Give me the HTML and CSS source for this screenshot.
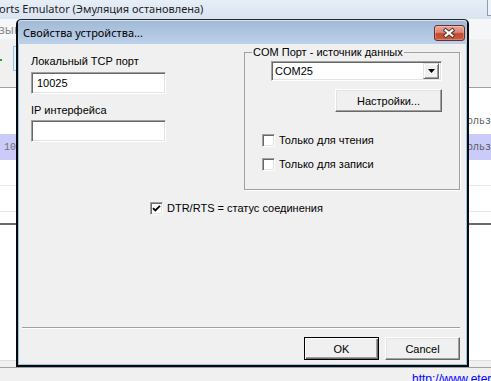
FILE: index.html
```html
<!DOCTYPE html>
<html lang="ru">
<head>
<meta charset="utf-8">
<title>Свойства устройства</title>
<link rel="stylesheet" href="styles.css">
</head>
<body>
<div class="app">
  <div class="app-title">
    <span class="app-title-text">orts Emulator (Эмуляция остановлена)</span>
    <span class="app-title-btn"></span>
  </div>
  <div class="menubar"><span class="menu-item">зык</span></div>
  <div class="toolbar">
    <svg class="tb-plus" width="8" height="8" viewBox="0 0 8 8"><path d="M4 1v6M1 4h6" stroke="#2f9a2f" stroke-width="2"/></svg>
    <span class="tb-btn"></span>
  </div>
  <div class="list">
    <div class="row row-top"></div>
    <div class="row"><span class="cell"></span><span class="cell">польз</span></div>
    <div class="row row-sel"><span class="cell">10025</span><span class="cell">польз</span></div>
    <div class="row row-line"></div>
    <div class="row row-line"></div>
    <div class="row row-end"></div>
  </div>
  <div class="lower"></div>
  <div class="lower-gap"></div>
  <div class="statusbar"><span class="link">http://www.eter</span></div>
</div>

<div class="dialog">
  <div class="dlg-titlebar">
    <span class="dlg-title">Свойства устройства...</span>
    <span class="dlg-close">
      <svg width="31" height="16" viewBox="0 0 31 16"><path d="M12 5.2L19 10.8M19 5.2L12 10.8" stroke="#5a3531" stroke-width="4.2" stroke-linecap="square"/><path d="M12 5.2L19 10.8M19 5.2L12 10.8" stroke="#ffffff" stroke-width="2.2" stroke-linecap="square"/></svg>
    </span>
  </div>
  <div class="dlg-client">
    <div class="dlg-top">
      <div class="dlg-left">
        <span class="lbl">Локальный TCP порт</span>
        <div class="edit">10025</div>
        <span class="lbl lbl-ip">IP интерфейса</span>
        <div class="edit"></div>
      </div>
      <fieldset class="group">
        <legend class="group-legend">COM Порт - источник данных</legend>
        <div class="group-body">
          <div class="combo">
            <span class="combo-text">COM25</span>
            <span class="combo-btn"><svg width="7" height="4" viewBox="0 0 7 4"><path d="M0 0h7L3.5 4z" fill="#000"/></svg></span>
          </div>
          <div class="btn btn-settings">Настройки...</div>
          <div class="check check-first"><span class="box"></span><span>Только для чтения</span></div>
          <div class="check check-second"><span class="box"></span><span>Только для записи</span></div>
        </div>
      </fieldset>
    </div>
    <div class="check check-dtr"><span class="box"><svg width="9" height="9" viewBox="0 0 9 9"><path d="M1 4.2L3.3 6.5L8 1.8" fill="none" stroke="#000" stroke-width="1.8"/></svg></span><span>DTR/RTS = статус соединения</span></div>
    <div class="spacer"></div>
    <div class="separator"></div>
    <div class="buttons">
      <div class="btn btn-default">OK</div>
      <div class="btn">Cancel</div>
    </div>
  </div>
</div>
</body>
</html>
```

FILE: styles.css
```css
html, body {
  margin: 0;
  padding: 0;
}
body {
  width: 491px;
  height: 381px;
  overflow: hidden;
  position: relative;
  font-family: "Liberation Sans", Arial, sans-serif;
  font-size: 11px;
  color: #000;
  background: #f0f0f0;
}

/* background application window */
.app {
  display: flex;
  flex-direction: column;
  height: 381px;
}
.app-title {
  height: 19px;
  flex: none;
  background: linear-gradient(#e6eef7, #d9e4f1);
  display: flex;
  align-items: flex-start;
}
.app-title-text {
  font-family: "Noto Sans", sans-serif;
  font-size: 11px;
  line-height: 17px;
  color: #1e1e1e;
  margin-left: -1px;
  white-space: nowrap;
}
.app-title-btn {
  margin-left: auto;
  width: 3px;
  height: 15px;
  border-left: 1px solid #8e9db1;
  border-bottom: 1px solid #8e9db1;
  background: #eef3f9;
}
.menubar {
  height: 20px;
  flex: none;
  background: #f5f6f8;
  display: flex;
  align-items: center;
}
.menu-item {
  font-family: "Noto Sans", sans-serif;
  font-size: 12px;
  color: #8c8c8c;
  margin-left: -1px;
}
.toolbar {
  height: 49px;
  flex: none;
  box-sizing: border-box;
  background: #f0f0f0;
  border-bottom: 1px solid #a0a0a0;
  display: flex;
  align-items: flex-start;
  padding-top: 7px;
}
.tb-plus {
  margin-left: -5px;
  margin-top: 10px;
}
.tb-btn {
  margin-left: 10px;
  width: 30px;
  height: 23px;
  border: 1px solid #93c2ec;
  background: #e8f2fb;
}
.list {
  display: flex;
  flex-direction: column;
  background: #fff;
  flex: none;
}
.row {
  display: grid;
  grid-template-columns: 461px 30px;
  align-items: center;
  font-family: "Liberation Mono", "Courier New", monospace;
  font-size: 10px;
  color: #5c5c5c;
  height: 25px;
  box-sizing: border-box;
  white-space: nowrap;
}
.row-top { height: 21px; }
.row-sel {
  height: 26px;
  background: #cbcbfa;
}
.row-sel .cell:first-child { padding-left: 4px; color: #707070; }
.row-line {
  height: 26px;
  border-bottom: 1px solid #e6e6e6;
}
.row-end { height: 11px; }
.lower {
  height: 138px;
  flex: none;
  box-sizing: border-box;
  background: #fff;
  border-top: 2px solid #6b6b6b;
  border-bottom: 1px solid #dedede;
}
.lower-gap {
  height: 6px;
  flex: none;
  background: #f0f0f0;
  border-bottom: 1px solid #a0a0a0;
}
.statusbar {
  flex: 1;
  background: #f0f0f0;
  padding: 4px 0 0 412px;
  white-space: nowrap;
}
.link {
  font-family: "Liberation Sans", Arial, sans-serif;
  font-size: 12px;
  line-height: 14px;
  color: #0000ff;
  text-decoration: underline;
}

/* dialog window */
.dialog {
  position: absolute;
  left: 16px;
  top: 19px;
  width: 453px;
  height: 348px;
  box-sizing: border-box;
  border: 2px solid #0a0a0a;
  border-top: 1px solid #2a2a2a;
  border-radius: 5px 5px 0 0;
  background: #8cc6ee;
  display: flex;
  flex-direction: column;
}
.dlg-titlebar {
  height: 24px;
  flex: none;
  display: flex;
  align-items: center;
  background: linear-gradient(#a1b9d6, #bcd1e9);
  box-shadow: inset 0 1px #d3e0ef;
  border-radius: 4px 4px 0 0;
}
.dlg-title {
  font-family: "Noto Sans", sans-serif;
  font-size: 11px;
  color: #000;
  margin-left: 5px;
  white-space: nowrap;
}
.dlg-close {
  margin-left: auto;
  margin-right: 2px;
  margin-top: 1px;
  width: 31px;
  height: 16px;
  box-sizing: border-box;
  border: 1px solid #6a2f27;
  border-radius: 3px;
  background: linear-gradient(#e6a99c, #d98676 45%, #c6472f 55%, #cd5c43);
  box-shadow: inset 0 0 0 1px rgba(255, 255, 255, 0.25);
  display: flex;
  align-items: center;
  justify-content: center;
  overflow: hidden;
}
.dlg-close svg { display: block; margin-left: -1px; }
.dlg-client {
  flex: 1;
  margin: 0 1px 1px 1px;
  background: #f0f0f0;
  display: flex;
  flex-direction: column;
}
.dlg-top {
  display: flex;
  align-items: flex-start;
}
.dlg-left {
  display: flex;
  flex-direction: column;
  margin-left: 12px;
  margin-top: 11px;
  width: 135px;
}
.lbl {
  line-height: 13px;
  white-space: nowrap;
}
.lbl-ip { margin-top: 10px; }
.edit {
  margin-top: 4px;
  height: 22px;
  box-sizing: border-box;
  border: 1px solid;
  border-color: #a0a0a0 #ffffff #ffffff #a0a0a0;
  box-shadow: inset 1px 1px #696969, inset -1px -1px #e3e3e3;
  background: #fff;
  padding: 0 0 0 5px;
  line-height: 20px;
}
.lbl-ip + .edit { margin-top: 3px; }

.group {
  margin: 2px 6px 0 auto;
  width: 216px;
  box-sizing: border-box;
  border: 1px solid #a0a0a0;
  box-shadow: 1px 1px #ffffff;
  padding: 0 17px 18px 17px;
  min-width: 0;
}
.group-legend {
  margin-left: -10px;
  padding: 0 1px;
  line-height: 13px;
  white-space: nowrap;
}
.group-body {
  display: flex;
  flex-direction: column;
}
.combo {
  margin: 2px 0 0 9px;
  height: 20px;
  box-sizing: border-box;
  border: 1px solid;
  border-color: #a0a0a0 #ffffff #ffffff #a0a0a0;
  box-shadow: inset 1px 1px #696969, inset -1px -1px #e3e3e3;
  background: #fff;
  display: flex;
  align-items: center;
  padding: 1px 2px 1px 3px;
}
.combo-text { flex: 1; }
.combo-btn {
  width: 16px;
  height: 16px;
  box-sizing: border-box;
  border: 1px solid;
  border-color: #e3e3e3 #696969 #696969 #e3e3e3;
  box-shadow: inset 1px 1px #fff, inset -1px -1px #a0a0a0;
  background: #f0f0f0;
  display: flex;
  align-items: center;
  justify-content: center;
}
.combo-btn svg { display: block; }
.btn {
  height: 23px;
  box-sizing: border-box;
  border: 1px solid;
  border-color: #ffffff #696969 #696969 #ffffff;
  box-shadow: inset -1px -1px #a0a0a0, inset 1px 1px #e3e3e3;
  background: #f0f0f0;
  display: flex;
  align-items: center;
  justify-content: center;
  white-space: nowrap;
}
.btn-settings {
  margin-top: 8px;
  align-self: flex-end;
  width: 107px;
}
.check {
  display: flex;
  align-items: center;
  gap: 4px;
  line-height: 13px;
  white-space: nowrap;
}
.check-first { margin-top: 22px; }
.check-second { margin-top: 11px; }
.box {
  width: 13px;
  height: 13px;
  flex: none;
  box-sizing: border-box;
  border: 1px solid;
  border-color: #a0a0a0 #ffffff #ffffff #a0a0a0;
  box-shadow: inset 1px 1px #696969, inset -1px -1px #e3e3e3;
  background: #fff;
  display: flex;
  align-items: center;
  justify-content: center;
}
.box svg { display: block; }
.check-dtr {
  margin: 12px 0 0 131px;
}
.spacer { flex: 1; }
.separator {
  height: 0;
  border-top: 1px solid #a0a0a0;
  border-bottom: 1px solid #ffffff;
  margin: 0 6px 0 3px;
}
.buttons {
  display: flex;
  justify-content: flex-end;
  gap: 6px;
  margin: 8px 6px 4px 0;
}
.buttons .btn { width: 75px; }
.btn-default {
  border: 1px solid #000;
  box-shadow: inset 1px 1px #fff, inset -1px -1px #696969, inset -2px -2px #a0a0a0;
}
```
